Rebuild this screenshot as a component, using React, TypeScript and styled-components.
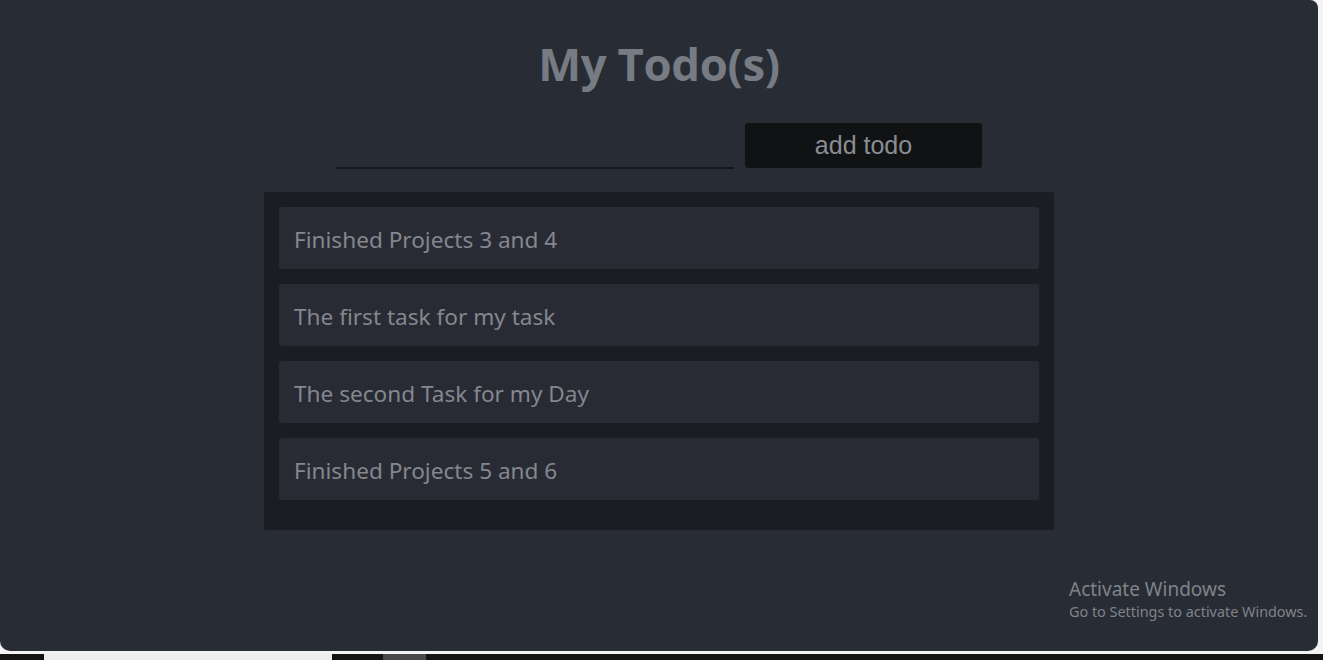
import React from "react";
import styled, { createGlobalStyle } from "styled-components";

const Global = createGlobalStyle`
  html, body { margin: 0; padding: 0; background: #f3f3f3; }
  body { width: 1323px; height: 660px; overflow: hidden; font-family: "Noto Sans", "Open Sans", sans-serif; }
`;

const Screen = styled.div`
  width: 1323px;
  height: 660px;
  display: flex;
  flex-direction: column;
  background: #f3f3f3;
`;

const Window = styled.div`
  position: relative;
  width: 1318px;
  height: 651px;
  background: #282c34;
  border-radius: 0 8px 10px 10px;
  display: flex;
  flex-direction: column;
  align-items: center;
  box-sizing: border-box;
  padding-top: 33px;
`;

const Title = styled.h1`
  margin: 0;
  font-family: "Open Sans", "Noto Sans", sans-serif;
  font-weight: 700;
  font-size: 45.5px;
  line-height: 60px;
  color: #777b83;
  letter-spacing: -0.4px;
`;

const Form = styled.div`
  display: flex;
  align-items: flex-end;
  gap: 11px;
  margin-top: 30px;
`;

const Input = styled.input`
  width: 398px;
  height: 30px;
  box-sizing: border-box;
  background: transparent;
  border: none;
  border-bottom: 2px solid #16181c;
  outline: none;
  color: #8a8d93;
  font-size: 20px;
`;

const AddButton = styled.button`
  width: 237px;
  height: 45px;
  background: #111214;
  border: none;
  border-radius: 3px;
  color: #8a8d93;
  font-family: "Liberation Sans", Arial, sans-serif;
  font-size: 25px;
  padding: 0;
  margin-bottom: 1px;
`;

const List = styled.div`
  margin-top: 23px;
  width: 790px;
  box-sizing: border-box;
  padding: 15px 15px 30px;
  background: #1b1d22;
  border-radius: 3px;
  display: flex;
  flex-direction: column;
  gap: 15px;
`;

const Item = styled.div`
  height: 62px;
  background: #282b34;
  border-radius: 3px;
  display: flex;
  align-items: center;
  padding: 3px 15px 0;
  color: #84878d;
  font-family: "Noto Sans", sans-serif;
  font-size: 22.6px;
  box-sizing: border-box;
`;

const Watermark = styled.div`
  position: absolute;
  left: 1069px;
  top: 576px;
  color: #80838a;
  font-family: "Noto Sans", sans-serif;
`;

const WmTitle = styled.div`
  font-size: 19px;
  line-height: 26px;
`;

const WmSub = styled.div`
  font-size: 14.4px;
  line-height: 20px;
`;

const Taskbar = styled.div`
  margin-top: 3px;
  height: 6px;
  background: #141414;
  display: flex;
  align-items: stretch;
`;

const TaskPiece = styled.div<{ $w: number; $ml: number; $bg: string }>`
  width: ${(p) => p.$w}px;
  margin-left: ${(p) => p.$ml}px;
  background: ${(p) => p.$bg};
`;

const todos = [
  "Finished Projects 3 and 4",
  "The first task for my task",
  "The second Task for my Day",
  "Finished Projects 5 and 6",
];

export default function App() {
  return (
    <Screen>
      <Global />
      <Window>
        <Title>My Todo(s)</Title>
        <Form>
          <Input />
          <AddButton>add todo</AddButton>
        </Form>
        <List>
          {todos.map((t) => (
            <Item key={t}>{t}</Item>
          ))}
        </List>
        <Watermark>
          <WmTitle>Activate Windows</WmTitle>
          <WmSub>Go to Settings to activate Windows.</WmSub>
        </Watermark>
      </Window>
      <Taskbar>
        <TaskPiece $w={288} $ml={44} $bg="#eeeeee" />
        <TaskPiece $w={43} $ml={51} $bg="#4a4a4a" />
      </Taskbar>
    </Screen>
  );
}
